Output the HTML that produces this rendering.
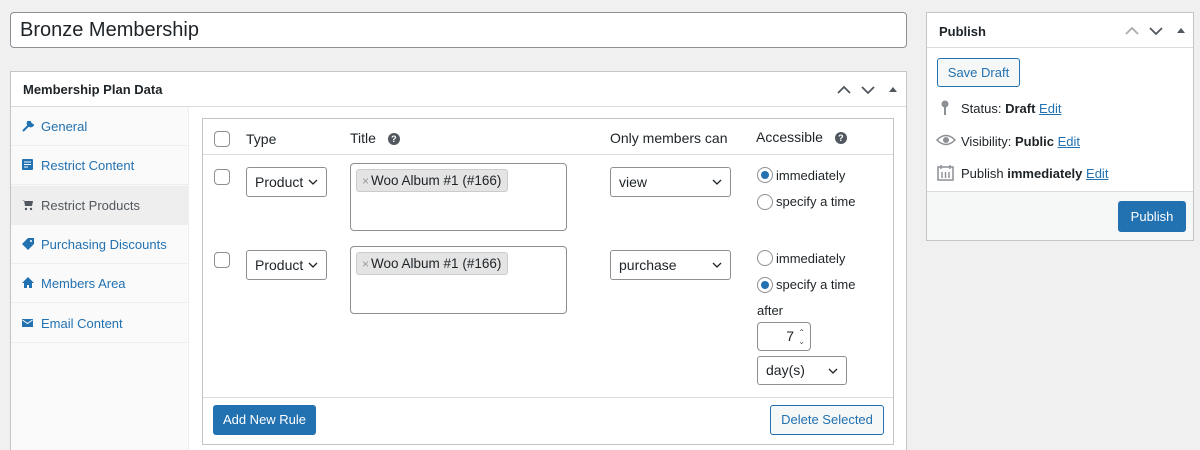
<!DOCTYPE html>
<html style="height:450px;overflow:hidden"><head><style>
*{box-sizing:border-box;margin:0;padding:0}
body{width:1200px;height:450px;background:#f0f0f1;font-family:"Liberation Sans",sans-serif;font-size:13px;color:#1d2327;position:relative;overflow:hidden}
.a{position:absolute}
.box{background:#fff;border:1px solid #c3c4c7}
.lnk{color:#2271b1}
.sel{position:absolute;background:#fff;border:1px solid #8c8f94;border-radius:3px;font-size:14px;padding-left:8px;line-height:28px;height:30px}
.sel svg{position:absolute;right:8px;top:11px}
.cb{position:absolute;width:16px;height:16px;border:1px solid #8c8f94;border-radius:4px;background:#fff}
.ta{position:absolute;background:#fff;border:1px solid #8c8f94;border-radius:4px}
.tag{position:absolute;left:5px;top:5px;background:#e4e4e4;border:1px solid #ccc;border-radius:3px;height:23px;line-height:21px;padding:0 6px 0 5px;font-size:13.5px;white-space:nowrap}
.tag span{color:#999;font-size:12px;margin-right:2px}
.rad{position:absolute;width:16px;height:16px;border:1px solid #8c8f94;border-radius:50%;background:#fff}
.rad.on::after{content:"";position:absolute;left:3px;top:3px;width:8px;height:8px;border-radius:50%;background:#2271b1}
.rl{position:absolute;font-size:13px}
.nav{position:absolute;left:0;width:178px;height:39px;border-bottom:1px solid #eee;line-height:39px;padding-left:30px;color:#2271b1}
.nav svg{position:absolute;left:11px;top:13px}
.help{display:inline-block;width:12px;height:12px;border-radius:50%;background:#50575e;color:#fff;font-size:9px;line-height:12px;text-align:center;font-weight:bold;vertical-align:middle}
</style></head><body>
<div class="a" style="left:10px;top:12px;width:897px;height:36px;background:#fff;border:1px solid #8c8f94;border-radius:4px;font-size:20px;line-height:34px;padding-left:9px">Bronze Membership</div>

<div class="a box" style="left:10px;top:71px;width:897px;height:385px">
 <div class="a" style="left:0;top:0;width:895px;height:35px;border-bottom:1px solid #dcdcde"></div>
 <div class="a" style="left:12px;top:10px;font-weight:bold;font-size:13px">Membership Plan Data</div>
 <svg class="a" style="left:826px;top:12px" width="60" height="12"><path d="M1 9l6-6 6 6" stroke="#50575e" stroke-width="1.8" fill="none"/><path d="M25 3l6 6 6-6" stroke="#50575e" stroke-width="1.8" fill="none"/><path d="M52 8l4-5 4 5z" fill="#50575e"/></svg>
 <div class="a" style="left:0;top:35px;width:178px;height:350px;background:#fafafa;border-right:1px solid #eee">
  <div class="nav" style="top:0"><svg width="12" height="12"><path d="M1 11l6-6M6 2a3 3 0 0 0 4 4l1-1-2-1-1-2z" stroke="#2271b1" stroke-width="2" fill="#2271b1"/></svg>General</div>
  <div class="nav" style="top:39px"><svg width="12" height="12"><rect x="0" y="0" width="11" height="11" rx="1" fill="#2271b1"/><path d="M2 3h7M2 5.5h7M2 8h4" stroke="#fff"/></svg>Restrict Content</div>
  <div class="nav" style="top:79px;background:#eee;color:#50575e"><svg width="12" height="12"><path d="M0 1h2l1 6h7l1-5H3" fill="#50575e"/><circle cx="4" cy="10" r="1.2" fill="#50575e"/><circle cx="9" cy="10" r="1.2" fill="#50575e"/></svg>Restrict Products</div>
  <div class="nav" style="top:118px"><svg width="12" height="12"><path d="M6 0h6v6l-6 6-6-6z" fill="#2271b1"/><circle cx="9" cy="3" r="1" fill="#fff"/></svg>Purchasing Discounts</div>
  <div class="nav" style="top:157px"><svg width="12" height="12"><path d="M6 0l6 6h-2v5H7V8H5v3H2V6H0z" fill="#2271b1"/></svg>Members Area</div>
  <div class="nav" style="top:197px"><svg width="12" height="12"><rect x="0" y="2" width="11" height="8" fill="#2271b1"/><path d="M0.5 3l5 3.5 5-3.5" stroke="#fff" fill="none"/></svg>Email Content</div>
 </div>
</div>

<div class="a box" style="left:202px;top:118px;width:692px;height:327px">
 <div class="a" style="left:0;top:0;width:690px;height:36px;border-bottom:1px solid #dcdcde"></div>
 <div class="cb" style="left:11px;top:12px"></div>
 <div class="a" style="left:43px;top:12px;font-size:14px">Type</div>
 <div class="a" style="left:147px;top:11px;font-size:14px">Title <span class="help" style="margin-left:8px">?</span></div>
 <div class="a" style="left:407px;top:11px;font-size:14px">Only members can</div>
 <div class="a" style="left:553px;top:10px;font-size:14px">Accessible <span class="help" style="margin-left:8px">?</span></div>

 <div class="cb" style="left:11px;top:50px"></div>
 <div class="sel" style="left:43px;top:48px;width:81px">Product<svg width="10" height="7"><path d="M1 1l4 4 4-4" stroke="#1d2327" stroke-width="1.3" fill="none"/></svg></div>
 <div class="ta" style="left:147px;top:44px;width:217px;height:68px"><div class="tag"><span>×</span>Woo Album #1 (#166)</div></div>
 <div class="sel" style="left:407px;top:48px;width:121px">view<svg width="10" height="7"><path d="M1 1l4 4 4-4" stroke="#1d2327" stroke-width="1.3" fill="none"/></svg></div>
 <div class="rad on" style="left:554px;top:48px"></div><div class="rl" style="left:573px;top:49px">immediately</div>
 <div class="rad" style="left:554px;top:75px"></div><div class="rl" style="left:573px;top:75px">specify a time</div>

 <div class="cb" style="left:11px;top:133px"></div>
 <div class="sel" style="left:43px;top:131px;width:81px">Product<svg width="10" height="7"><path d="M1 1l4 4 4-4" stroke="#1d2327" stroke-width="1.3" fill="none"/></svg></div>
 <div class="ta" style="left:147px;top:127px;width:217px;height:68px"><div class="tag"><span>×</span>Woo Album #1 (#166)</div></div>
 <div class="sel" style="left:407px;top:131px;width:121px">purchase<svg width="10" height="7"><path d="M1 1l4 4 4-4" stroke="#1d2327" stroke-width="1.3" fill="none"/></svg></div>
 <div class="rad" style="left:554px;top:131px"></div><div class="rl" style="left:573px;top:132px">immediately</div>
 <div class="rad on" style="left:554px;top:158px"></div><div class="rl" style="left:573px;top:158px">specify a time</div>
 <div class="rl" style="left:554px;top:184px">after</div>
 <div class="a" style="left:554px;top:203px;width:54px;height:29px;border:1px solid #8c8f94;border-radius:4px;background:#fff;font-size:14px;line-height:27px;text-align:right;padding-right:16px">7<span class="a" style="right:5px;font-size:8px;line-height:9px;top:5px;color:#555">&#8963;<br>&#8964;</span></div>
 <div class="sel" style="left:554px;top:237px;width:90px;height:29px;line-height:27px">day(s)<svg width="10" height="7"><path d="M1 1l4 4 4-4" stroke="#1d2327" stroke-width="1.3" fill="none"/></svg></div>

 <div class="a" style="left:0;top:278px;width:690px;height:1px;background:#dcdcde"></div>
 <div class="a" style="left:10px;top:286px;width:103px;height:30px;background:#2271b1;border-radius:3px;color:#fff;line-height:30px;text-align:center">Add New Rule</div>
 <div class="a" style="left:567px;top:286px;width:114px;height:30px;background:#f6f7f7;border:1px solid #2271b1;border-radius:3px;color:#2271b1;line-height:28px;text-align:center">Delete Selected</div>
</div>

<div class="a box" style="left:926px;top:12px;width:268px;height:229px">
 <div class="a" style="left:0;top:0;width:266px;height:35px;border-bottom:1px solid #dcdcde"></div>
 <div class="a" style="left:12px;top:11px;font-weight:bold">Publish</div>
 <svg class="a" style="left:198px;top:12px" width="62" height="12"><path d="M1 9l6-6 6 6" stroke="#a7aaad" stroke-width="1.8" fill="none"/><path d="M25 3l6 6 6-6" stroke="#50575e" stroke-width="1.8" fill="none"/><path d="M52 8l4-5 4 5z" fill="#50575e"/></svg>
 <div class="a" style="left:10px;top:45px;width:83px;height:29px;background:#f6f7f7;border:1px solid #2271b1;border-radius:3px;color:#2271b1;line-height:27px;text-align:center">Save Draft</div>
 <svg class="a" style="left:14px;top:87px" width="8" height="16"><circle cx="4" cy="4" r="3.5" fill="#8c8f94"/><rect x="3" y="6" width="2" height="9" fill="#8c8f94"/></svg>
 <div class="a" style="left:34px;top:88px">Status: <b>Draft</b> <u class="lnk">Edit</u></div>
 <svg class="a" style="left:9px;top:121px" width="20" height="12"><path d="M1 6Q10-3 19 6Q10 15 1 6z" fill="none" stroke="#8c8f94" stroke-width="1.5"/><circle cx="10" cy="6" r="3" fill="#8c8f94"/></svg>
 <div class="a" style="left:34px;top:121px">Visibility: <b>Public</b> <u class="lnk">Edit</u></div>
 <svg class="a" style="left:10px;top:151px" width="17" height="17"><rect x="1" y="3" width="15" height="13" fill="none" stroke="#8c8f94" stroke-width="1.5"/><path d="M4 1v4M13 1v4M5 8v6M8.5 8v6M12 8v6" stroke="#8c8f94" stroke-width="1.4"/></svg>
 <div class="a" style="left:34px;top:153px">Publish <b>immediately</b> <u class="lnk">Edit</u></div>
 <div class="a" style="left:0;top:178px;width:266px;height:49px;background:#f6f7f7;border-top:1px solid #dcdcde"></div>
 <div class="a" style="left:191px;top:188px;width:68px;height:31px;background:#2271b1;border-radius:3px;color:#fff;line-height:31px;text-align:center">Publish</div>
</div>
</body></html>
